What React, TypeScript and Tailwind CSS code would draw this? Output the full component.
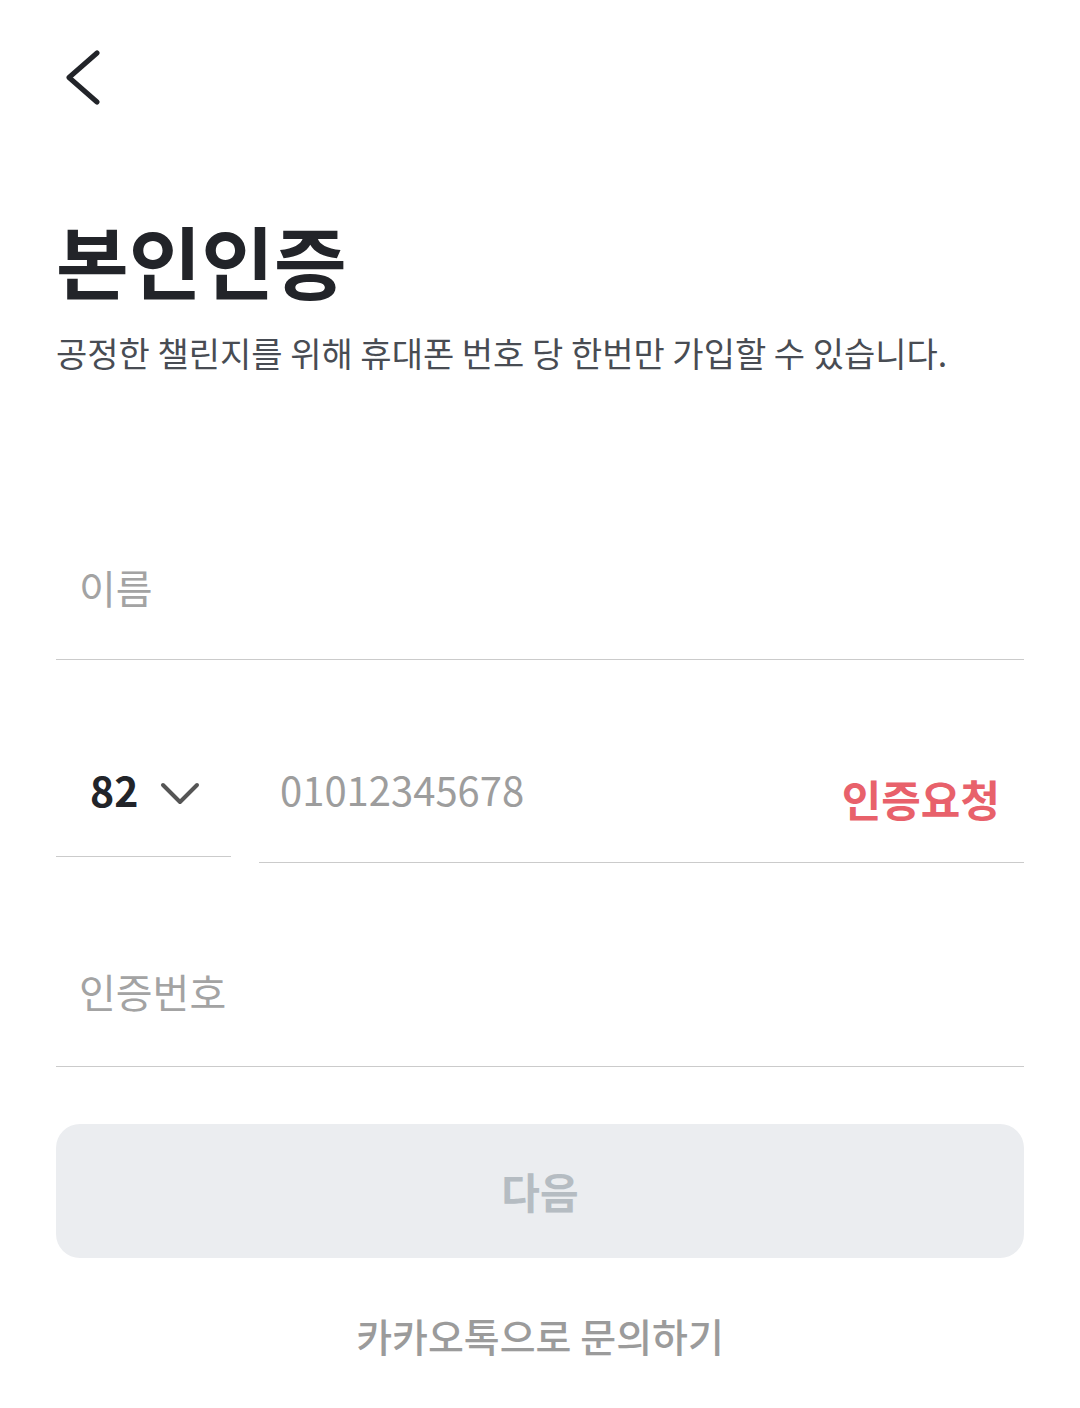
const font = "font-['Noto_Sans_CJK_KR','Noto_Sans',sans-serif]";

function BackIcon() {
	return (
		<svg width="36" height="56" viewBox="0 0 36 56" fill="none" className="ml-[9px] block">
			<path d="M32 3L4 27.5L32 52" stroke="#222429" strokeWidth="5" strokeLinecap="round" strokeLinejoin="round" />
		</svg>
	);
}

function Chevron() {
	return (
		<svg width="42" height="28" viewBox="0 0 42 28" fill="none" className="block">
			<path d="M3 5L20 22L37 5" stroke="#555" strokeWidth="4" strokeLinecap="round" strokeLinejoin="round" />
		</svg>
	);
}

export default function App() {
	return (
		<div className={`${font} min-h-[1408px] w-full bg-white px-14 pt-[50px]`}>
			{/* Header */}
			<BackIcon />

			<h1 className="mt-[110px] text-[79px] font-bold leading-[88px] text-[#222429]">본인인증</h1>
			<p className="mt-[27px] text-[34px] leading-[44px] text-[#484c53]">
				공정한 챌린지를 위해 휴대폰 번호 당 한번만 가입할 수 있습니다.
			</p>

			{/* Name */}
			<div className="mt-[165px] flex h-[120px] items-end border-b border-[#cbcbcb] pb-[50px] pl-[23px]">
				<span className="text-[40px] leading-[44px] text-[#a3a3a3]">이름</span>
			</div>

			{/* Phone */}
			<div className="mt-[69px] flex items-start gap-[28px]">
				<div className="flex h-[128px] w-[175px] items-end border-b border-[#cbcbcb] pb-[45px] pl-[34px]">
					<span className="text-[41px] font-bold leading-[44px] text-[#222429]">82</span>
					<div className="mb-[3px] ml-[22px]">
						<Chevron />
					</div>
				</div>
				<div className="flex h-[134px] flex-1 items-end justify-between border-b border-[#cbcbcb] pl-[21px] pr-[24px]">
					<span className="mb-[51px] text-[40px] leading-[44px] text-[#9d9d9d]">01012345678</span>
					<button className="mb-[42px] text-[43px] font-bold leading-[44px] text-[#e8616b]">인증요청</button>
				</div>
			</div>

			{/* Code */}
			<div className="flex h-[204px] items-end border-b border-[#cbcbcb] pb-[53px] pl-[23px]">
				<span className="text-[40px] leading-[44px] text-[#a3a3a3]">인증번호</span>
			</div>

			<button className="mt-[57px] flex h-[134px] w-full items-center justify-center rounded-[24px] bg-[#ebedf0]">
				<span className="text-[42px] font-bold leading-[44px] text-[#b5bcc2]">다음</span>
			</button>

			<p className="mt-[55px] text-center text-[39px] font-medium leading-[44px] text-[#9b9b9b]">카카오톡으로 문의하기</p>
		</div>
	);
}
